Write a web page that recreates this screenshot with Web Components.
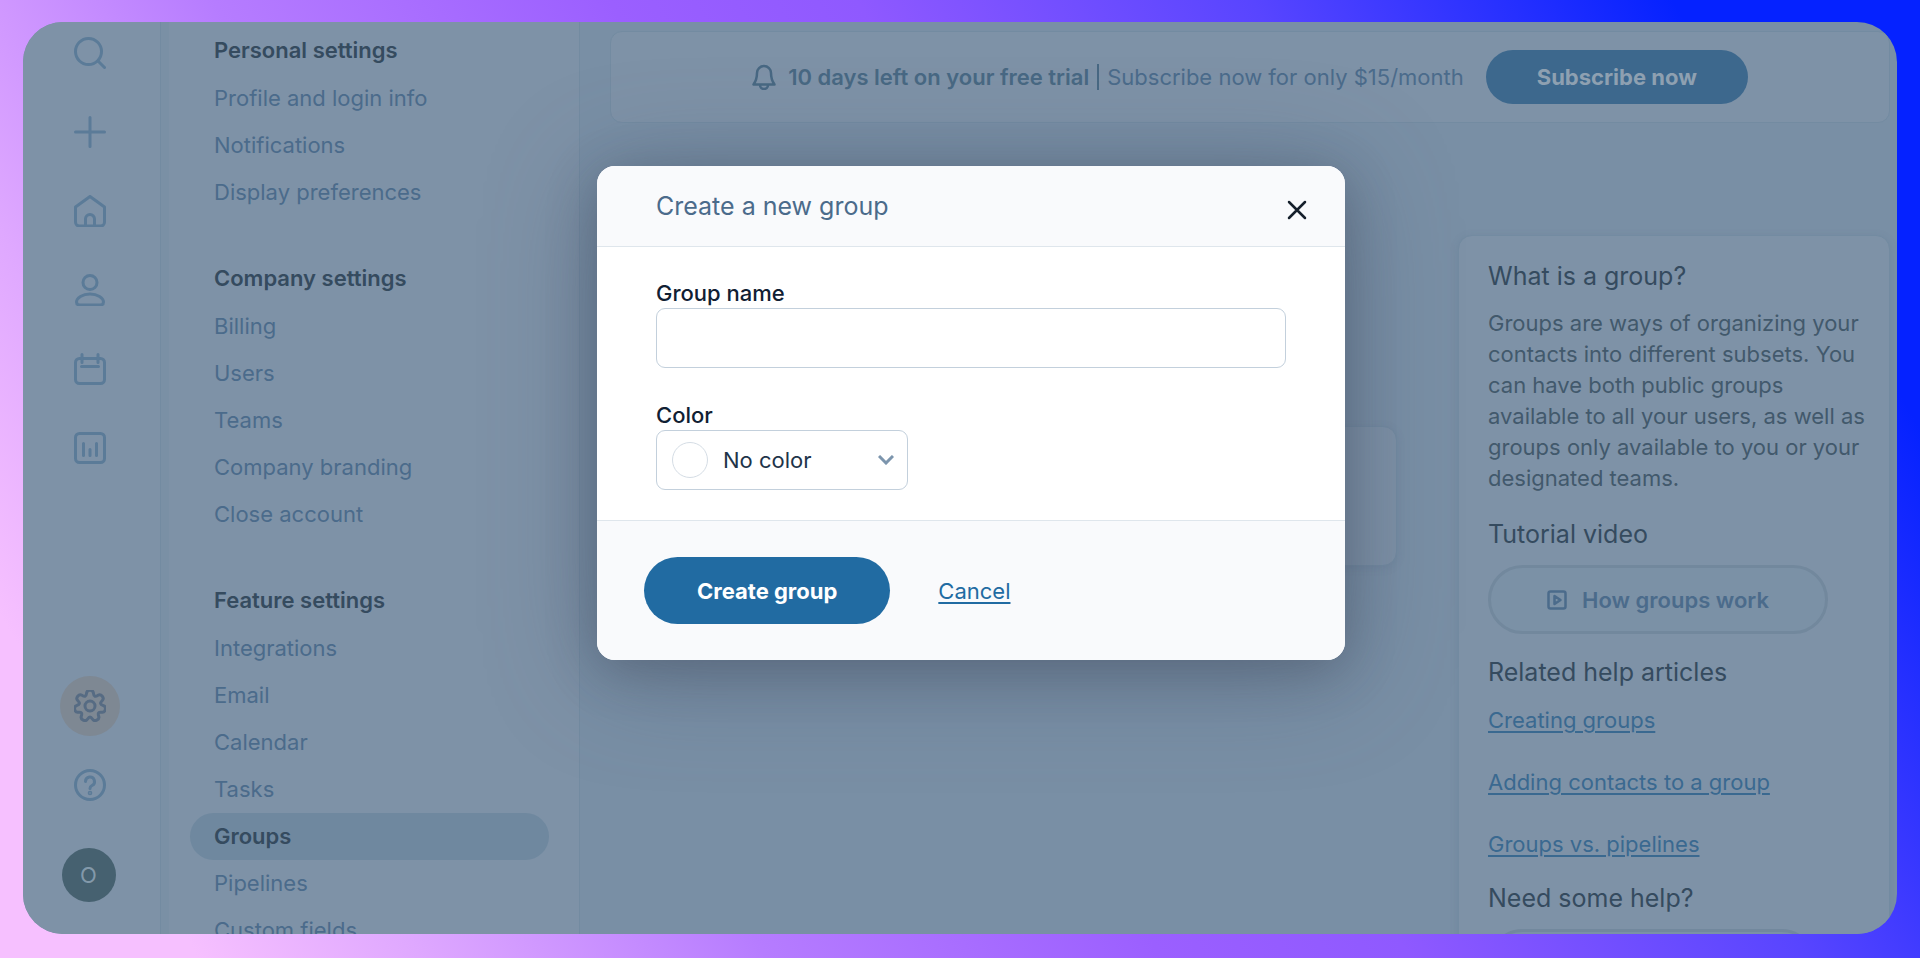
<!DOCTYPE html>
<html lang="en">
<head>
<meta charset="utf-8">
<meta name="viewport" content="width=device-width, initial-scale=1">
<title>Groups - Settings</title>
<style>
    body {
        --surface: #7e92a7;
        --canvas: #798fa5;
        --line: #738ba1;
        --ink: #354b5f;
        --ink-soft: #486883;
        --muted: #4b6b8b;
        --icon: #5b7b98;
        --link: #3a6990;
        margin: 0;
        box-sizing: border-box;
        height: 100vh;
        padding: 22px 23px 24px;
        font-family: Inter, "Liberation Sans", sans-serif;
        font-size: 22px;
        color: var(--ink);
        background: linear-gradient(60deg, #f6c0ff 8%, #dfa8ff 17%, #b67cff 31%, #9b5fff 47%, #8f59ff 57%, #5845ff 73%, #0522ff 90%);
    }
</style>
</head>
<body>
<app-frame>
    <icon-rail slot="rail"></icon-rail>
    <settings-nav slot="nav">
        <nav-group heading="Personal settings">
            <nav-item>Profile and login info</nav-item>
            <nav-item>Notifications</nav-item>
            <nav-item>Display preferences</nav-item>
        </nav-group>
        <nav-group heading="Company settings">
            <nav-item>Billing</nav-item>
            <nav-item>Users</nav-item>
            <nav-item>Teams</nav-item>
            <nav-item>Company branding</nav-item>
            <nav-item>Close account</nav-item>
        </nav-group>
        <nav-group heading="Feature settings">
            <nav-item>Integrations</nav-item>
            <nav-item>Email</nav-item>
            <nav-item>Calendar</nav-item>
            <nav-item>Tasks</nav-item>
            <nav-item current>Groups</nav-item>
            <nav-item>Pipelines</nav-item>
            <nav-item>Custom fields</nav-item>
        </nav-group>
    </settings-nav>
    <trial-banner slot="banner"></trial-banner>
    <help-panel slot="help"></help-panel>
    <group-dialog slot="dialog" heading="Create a new group"></group-dialog>
</app-frame>

<script>
// Outline of the settings cog: seven teeth, corners smoothed through the midpoints
function cogPath() {
    const pts = [];
    for (let i = 0; i < 7; i++) {
        for (const [r, d] of [[11, -20], [16, -11], [16, 11], [11, 20]]) {
            const a = (i * 360 / 7 + d - 90) * Math.PI / 180;
            pts.push([16 + r * Math.cos(a), 16 + r * Math.sin(a)]);
        }
    }
    const mid = (a, b) => ((a[0] + b[0]) / 2).toFixed(2) + ' ' + ((a[1] + b[1]) / 2).toFixed(2);
    let d = 'M' + mid(pts[pts.length - 1], pts[0]);
    pts.forEach((p, i) => {
        d += 'Q' + p[0].toFixed(2) + ' ' + p[1].toFixed(2) + ' ' + mid(p, pts[(i + 1) % pts.length]);
    });
    return d + 'Z';
}

const icons = {
    search: '<circle cx="14.5" cy="14.5" r="13"/><path d="M24 24l6.500 6.500"/>',
    plus: '<path d="M16 1.500v29M1.500 16h29"/>',
    home: '<path d="M1.500 12L16 1.500 30.500 12v15a4 4 0 0 1-4 4h-21a4 4 0 0 1-4-4zM11.500 31v-7a4.500 4.500 0 0 1 9 0v7"/>',
    person: '<circle cx="16" cy="8.500" r="7"/><path d="M16 20c7.500 0 13.500 4 13.500 8 0 2-1.500 3-3.500 3H6c-2 0-3.500-1-3.500-3 0-4 6-8 13.500-8z"/>',
    calendar: '<rect x="1.500" y="5.500" width="29" height="25" rx="4"/><path d="M8 1.500v8M24 1.500v8M7.500 13.500h17"/>',
    chart: '<rect x="1.500" y="1.500" width="29" height="29" rx="4"/><path d="M9.500 11.500v12M16 17.500v6M22.500 11.500v12"/>',
    cog: '<path d="' + cogPath() + '"/><circle cx="16" cy="16" r="5"/>',
    help: '<circle cx="16" cy="16" r="14.500"/><path d="M11.500 12.500a4.500 4.500 0 1 1 6.500 4c-1.500.8-2 1.500-2 3"/><circle cx="16" cy="24" r=".8"/>'
};

function icon(name) {
    return `<svg viewBox="0 0 32 32" width="32" height="32" aria-hidden="true" fill="none" stroke="currentColor" stroke-width="3" stroke-linecap="round" stroke-linejoin="round">${icons[name]}</svg>`;
}

class AppFrame extends HTMLElement {
    constructor() {
        super();
        this.attachShadow({ mode: 'open' }).innerHTML = `
            <style>
                :host {
                    display: grid;
                    grid-template-columns: 137px 420px minmax(0, 1fr);
                    grid-template-rows: minmax(0, 1fr);
                    position: relative;
                    height: 100%;
                    overflow: hidden;
                    border-radius: 40px;
                    background: var(--canvas);
                }
                main {
                    display: flex;
                    flex-direction: column;
                    gap: 112px;
                    min-width: 0;
                    padding: 9px 7px 0 30px;
                }
                .columns {
                    display: grid;
                    grid-template-columns: minmax(0, 1fr) 432px;
                    gap: 61px;
                }
                .list {
                    height: 138px;
                    margin-top: 191px;
                    border: 1px solid var(--line);
                    border-radius: 14px;
                    background: var(--surface);
                    box-shadow: 0 2px 8px rgba(70, 95, 120, 0.15);
                }
            </style>
            <slot name="rail"></slot>
            <slot name="nav"></slot>
            <main>
                <slot name="banner"></slot>
                <div class="columns">
                    <div><div class="list"></div></div>
                    <slot name="help"></slot>
                </div>
            </main>
            <slot name="dialog"></slot>
        `;
    }
}

class IconRail extends HTMLElement {
    constructor() {
        super();
        const button = (name, label, cls = '') => `<button class="${cls}" aria-label="${label}">${icon(name)}</button>`;
        this.attachShadow({ mode: 'open' }).innerHTML = `
            <style>
                :host {
                    display: flex;
                    flex-direction: column;
                    align-items: center;
                    justify-content: space-between;
                    box-sizing: border-box;
                    min-height: 0;
                    padding: 1px 4px 32px 0;
                    background: var(--surface);
                }
                nav {
                    display: flex;
                    flex-direction: column;
                    align-items: center;
                    gap: 19px;
                }
                button {
                    display: grid;
                    place-items: center;
                    width: 60px;
                    height: 60px;
                    padding: 0;
                    border: 0;
                    border-radius: 50%;
                    background: none;
                    color: var(--icon);
                    font: inherit;
                }
                .active {
                    background: #7e8893;
                    color: #566b83;
                }
                .avatar {
                    width: 54px;
                    height: 54px;
                    margin: 14px 2px 0 0;
                    background: #466170;
                    color: #8399aa;
                }
            </style>
            <nav aria-label="Main">
                ${button('search', 'Search')}
                ${button('plus', 'Add')}
                ${button('home', 'Home')}
                ${button('person', 'Contacts')}
                ${button('calendar', 'Calendar')}
                ${button('chart', 'Reports')}
            </nav>
            <nav aria-label="Account">
                ${button('cog', 'Settings', 'active')}
                ${button('help', 'Help')}
                <button class="avatar">O</button>
            </nav>
        `;
    }
}

class SettingsNav extends HTMLElement {
    constructor() {
        super();
        this.attachShadow({ mode: 'open' }).innerHTML = `
            <style>
                :host {
                    display: block;
                    box-sizing: border-box;
                    min-height: 0;
                    padding: 4px 30px 0 21px;
                    border-left: 1px solid var(--line);
                    border-right: 1px solid var(--line);
                    background: var(--surface);
                    box-shadow: inset 8px 0 0 #7a90a5;
                }
                nav {
                    display: flex;
                    flex-direction: column;
                    gap: 38px;
                }
            </style>
            <nav aria-label="Settings"><slot></slot></nav>
        `;
    }
}

class NavGroup extends HTMLElement {
    constructor() {
        super();
        this.attachShadow({ mode: 'open' }).innerHTML = `
            <style>
                :host {
                    display: block;
                    padding-left: 8px;
                }
                h2 {
                    margin: 0;
                    padding-left: 24px;
                    font-size: 22px;
                    font-weight: 600;
                    line-height: 49px;
                }
            </style>
            <h2>${this.getAttribute('heading')}</h2>
            <slot></slot>
        `;
    }
}

class NavItem extends HTMLElement {
    constructor() {
        super();
        this.attachShadow({ mode: 'open' }).innerHTML = `
            <style>
                :host {
                    display: block;
                }
                a {
                    display: block;
                    padding: 0 24px;
                    border-radius: 24px;
                    color: var(--muted);
                    line-height: 47px;
                    text-decoration: none;
                }
                :host([current]) a {
                    background: #6f889f;
                    color: var(--ink);
                    font-weight: 600;
                }
            </style>
            <a href="#"><slot></slot></a>
        `;
    }
}

class TrialBanner extends HTMLElement {
    constructor() {
        super();
        this.attachShadow({ mode: 'open' }).innerHTML = `
            <style>
                :host {
                    display: flex;
                    align-items: center;
                    justify-content: center;
                    gap: 22px;
                    box-sizing: border-box;
                    padding: 18px 0;
                    border: 1px solid var(--line);
                    border-radius: 12px;
                    background: var(--surface);
                    color: var(--muted);
                    white-space: nowrap;
                }
                p {
                    display: flex;
                    align-items: center;
                    margin: 0;
                }
                svg {
                    margin-right: 12px;
                }
                strong {
                    font-weight: 600;
                    color: var(--ink-soft);
                }
                .bar {
                    width: 2px;
                    height: 26px;
                    margin: 0 8px;
                    background: var(--ink-soft);
                }
                button {
                    height: 54px;
                    padding: 0 51px;
                    border: 0;
                    border-radius: 27px;
                    background: #3d688d;
                    color: #8ea0b1;
                    font: inherit;
                    font-weight: 700;
                }
            </style>
            <p>
                <svg viewBox="0 0 24 26" width="24" height="26" aria-hidden="true" fill="none" stroke="#486883" stroke-width="2.5" stroke-linejoin="round">
                    <path d="M12 2a7 7 0 0 0-7 7C5 15 4 17 1.500 20.500h21C20 17 19 15 19 9A7 7 0 0 0 12 2zM8 21a4 4 0 0 0 8 0"/>
                </svg>
                <strong>10 days left on your free trial</strong>
                <span class="bar"></span>
                <span>Subscribe now for only $15/month</span>
            </p>
            <button>Subscribe now</button>
        `;
    }
}

class HelpPanel extends HTMLElement {
    constructor() {
        super();
        this.attachShadow({ mode: 'open' }).innerHTML = `
            <style>
                :host {
                    display: block;
                    box-sizing: border-box;
                    padding: 24px 24px 24px 29px;
                    border: 1px solid var(--line);
                    border-radius: 14px;
                    background: var(--surface);
                    box-shadow: 0 2px 8px rgba(70, 95, 120, 0.15);
                }
                h2 {
                    margin: 0;
                    font-size: 25px;
                    font-weight: 400;
                    line-height: 32px;
                }
                p {
                    margin: 16px 0 24px;
                    color: #42596c;
                    line-height: 31px;
                }
                button {
                    display: flex;
                    align-items: center;
                    justify-content: center;
                    gap: 15px;
                    width: 340px;
                    height: 69px;
                    margin: 15px 0 22px;
                    border: 3px solid #72889d;
                    border-radius: 35px;
                    background: #7b91a6;
                    color: var(--muted);
                    font: inherit;
                    font-weight: 600;
                }
                .contact {
                    width: 328px;
                }
                ul {
                    display: flex;
                    flex-direction: column;
                    gap: 30px;
                    margin: 16px 0 22px;
                    padding: 0;
                    list-style: none;
                    line-height: 32px;
                }
                a {
                    color: var(--link);
                    text-underline-offset: 3px;
                    text-decoration-thickness: 2px;
                }
            </style>
            <h2>What is a group?</h2>
            <p>Groups are ways of organizing your contacts into different subsets. You can have both public groups available to all your users, as well as groups only available to you or your designated teams.</p>
            <h2>Tutorial video</h2>
            <button>
                <svg viewBox="0 0 20 20" width="20" height="20" aria-hidden="true" fill="none" stroke="currentColor" stroke-width="2.5" stroke-linejoin="round">
                    <rect x="1.500" y="1.500" width="17" height="17" rx="2"/><path d="M7.500 6v8l6-4z"/>
                </svg>
                How groups work
            </button>
            <h2>Related help articles</h2>
            <ul>
                <li><a href="#">Creating groups</a></li>
                <li><a href="#">Adding contacts to a group</a></li>
                <li><a href="#">Groups vs. pipelines</a></li>
            </ul>
            <h2>Need some help?</h2>
            <button class="contact" aria-label="Contact support"></button>
        `;
    }
}

class GroupDialog extends HTMLElement {
    constructor() {
        super();
        this.attachShadow({ mode: 'open' }).innerHTML = `
            <style>
                :host {
                    position: absolute;
                    inset: 0;
                    display: flex;
                    align-items: flex-start;
                    justify-content: center;
                    padding: 144px 0 0 22px;
                    color: #102033;
                }
                form {
                    width: 748px;
                    overflow: hidden;
                    border-radius: 18px;
                    background: #fff;
                    box-shadow: 0 10px 50px rgba(50, 55, 70, 0.3), 0 12px 110px rgba(70, 85, 110, 0.45);
                }
                header {
                    display: flex;
                    align-items: center;
                    justify-content: space-between;
                    height: 81px;
                    box-sizing: border-box;
                    padding: 0 32px 0 59px;
                    border-bottom: 1px solid #dfe6ec;
                    background: #f9fafc;
                }
                h1 {
                    margin: 0;
                    font-size: 25px;
                    font-weight: 400;
                    color: #4b6b8b;
                }
                header button {
                    display: grid;
                    place-items: center;
                    width: 32px;
                    height: 32px;
                    margin-top: 8px;
                    padding: 0;
                    border: 0;
                    background: none;
                    color: #16202c;
                }
                .fields {
                    padding: 31px 59px 30px;
                }
                label {
                    display: block;
                    font-weight: 500;
                    line-height: 30px;
                }
                input, .picker {
                    box-sizing: border-box;
                    height: 60px;
                    border: 1px solid #c3d0dc;
                    border-radius: 9px;
                    background: #fff;
                    font: inherit;
                }
                input {
                    display: block;
                    width: 100%;
                    margin-bottom: 32px;
                    padding: 0 16px;
                }
                .picker {
                    display: flex;
                    align-items: center;
                    width: 252px;
                    padding: 0 13px 0 15px;
                }
                .swatch {
                    box-sizing: border-box;
                    flex: none;
                    width: 36px;
                    height: 36px;
                    border: 1px solid #d5dde5;
                    border-radius: 50%;
                }
                select {
                    appearance: none;
                    flex: 1;
                    min-width: 0;
                    height: 100%;
                    padding: 0 0 0 15px;
                    border: 0;
                    background: none;
                    color: #1e3449;
                    font: inherit;
                }
                footer {
                    display: flex;
                    align-items: center;
                    gap: 48px;
                    height: 140px;
                    box-sizing: border-box;
                    padding: 0 47px;
                    border-top: 1px solid #dfe6ec;
                    background: #f9fafc;
                }
                .submit {
                    height: 67px;
                    padding: 0 53px;
                    border: 0;
                    border-radius: 34px;
                    background: #216ba2;
                    color: #fff;
                    font: inherit;
                    font-weight: 700;
                }
                a {
                    color: #216ba2;
                    text-underline-offset: 3px;
                    text-decoration-thickness: 2px;
                }
            </style>
            <form role="dialog" aria-modal="true" aria-labelledby="title">
                <header>
                    <h1 id="title">${this.getAttribute('heading')}</h1>
                    <button type="button" aria-label="Close">
                        <svg viewBox="0 0 20 20" width="20" height="20" aria-hidden="true" stroke="currentColor" stroke-width="2.5" stroke-linecap="round"><path d="M2 2l16 16M18 2L2 18"/></svg>
                    </button>
                </header>
                <div class="fields">
                    <label for="name">Group name</label>
                    <input id="name" type="text">
                    <label for="color">Color</label>
                    <div class="picker">
                        <span class="swatch"></span>
                        <select id="color"><option>No color</option></select>
                        <svg viewBox="0 0 16 10" width="16" height="10" aria-hidden="true" fill="none" stroke="#7c95ad" stroke-width="3"><path d="M1 1l7 7 7-7"/></svg>
                    </div>
                </div>
                <footer>
                    <button class="submit">Create group</button>
                    <a href="#">Cancel</a>
                </footer>
            </form>
        `;
    }
}

customElements.define('app-frame', AppFrame);
customElements.define('icon-rail', IconRail);
customElements.define('settings-nav', SettingsNav);
customElements.define('nav-group', NavGroup);
customElements.define('nav-item', NavItem);
customElements.define('trial-banner', TrialBanner);
customElements.define('help-panel', HelpPanel);
customElements.define('group-dialog', GroupDialog);
</script>
</body>
</html>
